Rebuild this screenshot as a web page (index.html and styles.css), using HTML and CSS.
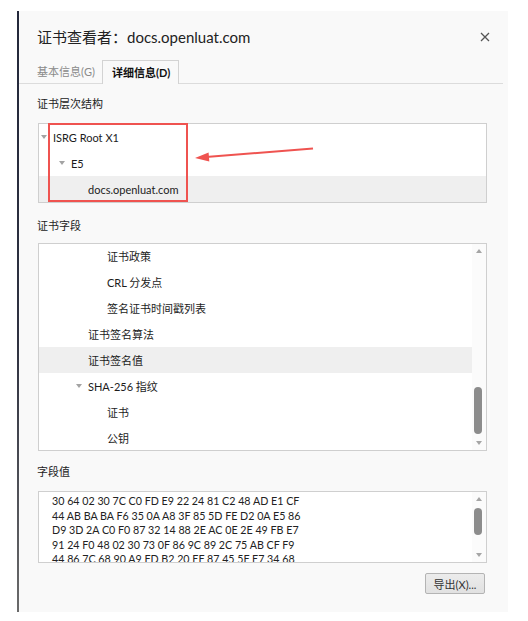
FILE: index.html
```html
<!DOCTYPE html>
<html lang="zh-CN">
<head>
    <meta charset="UTF-8">
    <title>证书查看者</title>
    <link rel="stylesheet" href="styles.css">
</head>
<body>
    <div class="frame">
        <div class="edge"></div>

        <div class="dialog">
            <!-- Title bar -->
            <div class="title-bar">
                <h1 class="title">证书查看者：docs.openluat.com</h1>
                <span class="close">
                    <svg width="10" height="10" viewBox="0 0 10 10">
                        <path d="M1 1 L9 9 M9 1 L1 9" stroke="#555" stroke-width="1.3" fill="none"/>
                    </svg>
                </span>
            </div>

            <!-- Tabs -->
            <div class="tabs">
                <span class="tab">基本信息(G)</span>
                <span class="tab active">详细信息(D)</span>
            </div>

            <div class="content">
                <div class="section-label label-tree">证书层次结构</div>
                <div class="tree-wrap">
                    <div class="box tree">
                        <div class="row lv1"><span class="twisty open"></span>ISRG Root X1</div>
                        <div class="row lv2"><span class="twisty open"></span>E5</div>
                        <div class="row lv3 selected"><span class="twisty"></span>docs.openluat.com</div>
                    </div>
                    <!-- red annotation drawn over the tree -->
                    <svg class="annotation" width="449" height="80" viewBox="0 0 449 80">
                        <rect x="11" y="1" width="138" height="77" fill="none" stroke="#ef5350" stroke-width="2"/>
                        <line x1="275" y1="25.5" x2="168" y2="34" stroke="#ef5350" stroke-width="2"/>
                        <polygon points="157,35 171.3,38.5 170.6,29.5" fill="#ef5350"/>
                    </svg>
                </div>

                <div class="section-label label-fields">证书字段</div>
                <div class="box fields">
                    <div class="list">
                        <div class="row lv4"><span class="twisty"></span>证书政策</div>
                        <div class="row lv4"><span class="twisty"></span>CRL 分发点</div>
                        <div class="row lv4"><span class="twisty"></span>签名证书时间戳列表</div>
                        <div class="row lv3"><span class="twisty"></span>证书签名算法</div>
                        <div class="row lv3 selected"><span class="twisty"></span>证书签名值</div>
                        <div class="row lv3"><span class="twisty open"></span>SHA-256 指纹</div>
                        <div class="row lv4"><span class="twisty"></span>证书</div>
                        <div class="row lv4"><span class="twisty"></span>公钥</div>
                    </div>
                    <div class="scrollbar">
                        <span class="arrow up"></span>
                        <div class="track"><div class="thumb fields-thumb"></div></div>
                        <span class="arrow down"></span>
                    </div>
                </div>

                <div class="section-label label-value">字段值</div>
                <div class="box value">
                    <div class="hex">
                        <div>30 64 02 30 7C C0 FD E9 22 24 81 C2 48 AD E1 CF</div>
                        <div>44 AB BA BA F6 35 0A A8 3F 85 5D FE D2 0A E5 86</div>
                        <div>D9 3D 2A C0 F0 87 32 14 88 2E AC 0E 2E 49 FB E7</div>
                        <div>91 24 F0 48 02 30 73 0F 86 9C 89 2C 75 AB CF F9</div>
                        <div>44 86 7C 68 90 A9 FD B2 20 EF 87 45 5F E7 34 68</div>
                    </div>
                    <div class="scrollbar">
                        <span class="arrow up"></span>
                        <div class="track"><div class="thumb value-thumb"></div></div>
                        <span class="arrow down"></span>
                    </div>
                </div>

                <div class="actions">
                    <button class="export-button">导出(X)...</button>
                </div>
            </div>
        </div>
    </div>
</body>
</html>
```

FILE: styles.css
```css
body {
    margin: 0;
    background: #fff;
    font-family: Lato, "Noto Sans CJK SC", sans-serif;
    font-size: 11px;
    color: #1c1c1c;
}

.frame {
    display: flex;
    padding: 11px 0 0 17px;
    height: 601px;
}

/* dark strip on the left of the window */
.edge {
    width: 2px;
    background: linear-gradient(#23283b, #2e3140 55%, #6a6a6a);
}

.dialog {
    width: 489px;
    height: 601px;
    background: #f9f9f9;
    box-sizing: border-box;
}

.title-bar {
    display: flex;
    justify-content: space-between;
    align-items: center;
    height: 49px;
    padding: 3px 18px 0 18px;
    box-sizing: border-box;
}

.title {
    margin: 0;
    font-size: 15px;
    font-weight: normal;
    color: #222;
    line-height: 22px;
}

.close {
    display: flex;
    width: 10px;
    height: 10px;
}

.tabs {
    display: flex;
    align-items: flex-end;
    height: 23px;
    margin-right: 5px;
    padding-left: 18px;
    border-bottom: 1px solid #dcdcdc;
}

.tab {
    line-height: 22px;
    padding-right: 7px;
    color: #8a8a8a;
}

.tab.active {
    padding: 0 8px 0 9px;
    margin-bottom: -1px;
    height: 23px;
    line-height: 23px;
    border: 1px solid #d3d3d3;
    border-bottom: none;
    background: #f9f9f9;
    color: #111;
    font-weight: bold;
}

.content {
    padding-left: 18px;
}

.section-label {
    line-height: 16px;
    color: #222;
}

.label-tree {
    padding-top: 12px;
    margin-bottom: 11px;
}

.label-fields {
    padding-top: 15px;
    margin-bottom: 9px;
}

.label-value {
    padding-top: 13px;
    margin-bottom: 11px;
}

.box {
    width: 449px;
    margin-left: 1px;
    border: 1px solid #cfcfcf;
    background: #fff;
    box-sizing: border-box;
    overflow: hidden;
}

.tree-wrap {
    position: relative;
    width: 449px;
    margin-left: 1px;
}

.tree-wrap .box {
    margin-left: 0;
}

.tree {
    height: 80px;
}

.annotation {
    position: absolute;
    left: 0;
    top: 0;
    overflow: visible;
}

.row {
    display: flex;
    align-items: center;
    height: 26px;
    white-space: nowrap;
}

.row.selected {
    background: #efefef;
}

.lv1 { padding-left: 1px; }
.lv2 { padding-left: 19px; }
.lv3 { padding-left: 36px; }
.lv4 { padding-left: 55px; }

.twisty {
    width: 13px;
    flex-shrink: 0;
}

.twisty.open::before {
    content: "";
    display: block;
    margin-left: 1px;
    width: 0;
    height: 0;
    border-left: 3.5px solid transparent;
    border-right: 3.5px solid transparent;
    border-top: 4px solid #a3a3a3;
}

.fields {
    display: flex;
    height: 208px;
}

.list {
    flex: 1;
    margin-top: -1px;
}

.value {
    display: flex;
    height: 72px;
}

.hex {
    flex: 1;
    padding: 2px 0 0 13px;
    font-size: 10.7px;
    line-height: 14.6px;
    color: #222;
}

/* fake scrollbars */
.scrollbar {
    display: flex;
    flex-direction: column;
    width: 14px;
    background: #fbfbfb;
}

.arrow {
    display: flex;
    justify-content: center;
    align-items: center;
    height: 14px;
}

.arrow::before {
    content: "";
    width: 0;
    height: 0;
    border-left: 3.5px solid transparent;
    border-right: 3.5px solid transparent;
}

.arrow.up::before {
    border-bottom: 4px solid #a5a5a5;
}

.arrow.down::before {
    border-top: 4px solid #a5a5a5;
}

.track {
    flex: 1;
}

.thumb {
    width: 8px;
    margin-left: 2px;
    border-radius: 4px;
    background: #8c8c8c;
}

.fields-thumb {
    margin-top: 129px;
    height: 47px;
}

.value-thumb {
    margin-top: 2px;
    height: 27px;
}

.actions {
    display: flex;
    justify-content: flex-end;
    width: 449px;
    margin-left: 1px;
    padding-right: 2px;
    box-sizing: border-box;
    margin-top: 10px;
}

.export-button {
    width: 60px;
    height: 21px;
    padding: 0;
    border: 1px solid #b4b4b4;
    border-radius: 2px;
    background: linear-gradient(#ececec, #e1e1e1);
    font-family: inherit;
    font-size: 11px;
    color: #333;
}
```
